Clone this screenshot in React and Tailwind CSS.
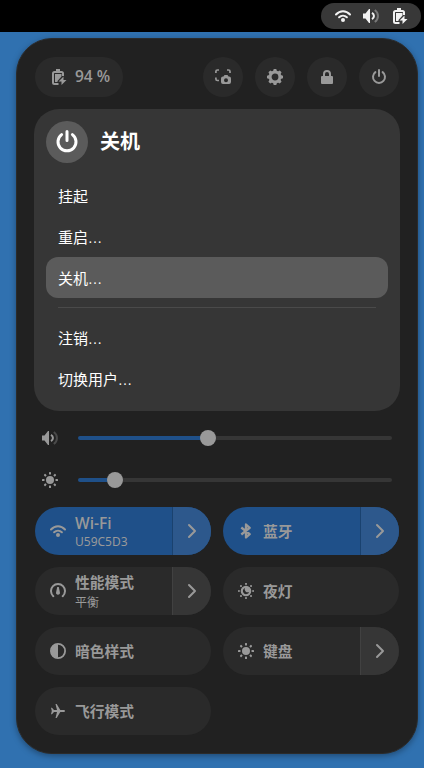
import React from "react";

function Icon({ children, size = "size-4" }) {
  return (
    <svg viewBox="0 0 16 16" className={`${size} shrink-0`} fill="currentColor" aria-hidden="true">
      {children}
    </svg>
  );
}

const stroke = { fill: "none", stroke: "currentColor", strokeWidth: 2 };

function WifiIcon() {
  return (
    <Icon>
      <path {...stroke} strokeLinecap="round" d="M1 6.500C5 2.200 11 2.200 15 6.500" />
      <path {...stroke} strokeLinecap="round" d="M4.100 9.200C6.300 7.100 9.700 7.100 11.900 9.200" />
      <circle cx="8" cy="12" r="2" />
    </Icon>
  );
}

function VolumeIcon() {
  return (
    <Icon>
      <path d="M0 5.500h2.500L6 1h1v14H6l-3.500-4.500H0z" />
      <path {...stroke} d="M9 4.800c2.600 1.600 2.600 4.800 0 6.400" />
      <path {...stroke} opacity="0.35" d="M11.800 2c4.200 3 4.200 9 0 12" />
    </Icon>
  );
}

function BatteryIcon() {
  return (
    <Icon>
      <path d="M5 0h4v2H5z" />
      <path {...stroke} d="M7.500 15H3.500A1.500 1.500 0 0 1 2 13.500v-9A1.500 1.500 0 0 1 3.500 3h7A1.500 1.500 0 0 1 12 4.500V7" />
      <path d="M4 5h6.500v2.500L6.500 12v1H4z" />
      <path d="M12.500 7.500v3.500H15.500L10.500 16v-3.500H7.500z" />
    </Icon>
  );
}

function ScreenshotIcon() {
  return (
    <Icon>
      <path {...stroke} strokeWidth="1.700" d="M.9 4V2.500A1.500 1.500 0 0 1 2.400 1H4M12 1h1.500A1.500 1.500 0 0 1 15 2.500V4M.9 8.500V10a1.500 1.500 0 0 0 1.500 1.500H4" />
      <path
        fillRule="evenodd"
        d="M8 7.500h.5l1-1.500h3l1 1.500h.5a2 2 0 0 1 2 2V13a2 2 0 0 1-2 2H8a2 2 0 0 1-2-2V9.500a2 2 0 0 1 2-2zM11 9.200a2 2 0 1 0 0 4 2 2 0 0 0 0-4z"
      />
    </Icon>
  );
}

function GearIcon() {
  return (
    <Icon>
      <circle cx="8" cy="8" r="4.900" fill="none" stroke="currentColor" strokeWidth="3" />
      {[0, 45, 90, 135].map((angle) => (
        <path key={angle} transform={`rotate(${angle} 8 8)`} d="M6.700 0h2.600l.7 2.500H6zM6 13.500h4L9.300 16H6.700z" />
      ))}
    </Icon>
  );
}

function LockIcon() {
  return (
    <Icon>
      <path {...stroke} d="M5 8V5a3 3 0 0 1 6 0v3" />
      <path d="M3 7h10a1 1 0 0 1 1 1v6a1 1 0 0 1-1 1H3a1 1 0 0 1-1-1V8a1 1 0 0 1 1-1z" />
    </Icon>
  );
}

function PowerIcon({ size }) {
  return (
    <Icon size={size}>
      <path {...stroke} strokeLinecap="round" d="M4.400 3.100a6 6 0 1 0 7.200 0M8 1v6" />
    </Icon>
  );
}

function SunIcon() {
  return (
    <Icon>
      <circle cx="8" cy="8" r="4" />
      {[0, 45, 90, 135, 180, 225, 270, 315].map((angle) => (
        <rect key={angle} x="7" y="0" width="2" height="2.500" rx="0.600" transform={`rotate(${angle} 8 8)`} />
      ))}
    </Icon>
  );
}

function NightLightIcon() {
  return (
    <Icon>
      <path
        fillRule="evenodd"
        d="M8 2.700a5.300 5.300 0 1 0 0 10.600A5.300 5.300 0 0 0 8 2.700zM7 4.900A3 3 0 0 0 11.100 8.900 3.200 3.200 0 1 1 7 4.900z"
      />
      {[0, 45, 90, 135, 180, 225, 270, 315].map((angle) => (
        <circle key={angle} cx="8" cy="0.900" r="1" transform={`rotate(${angle} 8 8)`} />
      ))}
    </Icon>
  );
}

function GaugeIcon() {
  return (
    <Icon>
      <path {...stroke} strokeLinecap="round" d="M3.300 13.200a7 7 0 1 1 9.400 0" />
      <path d="M7.200 4h1.600l1.100 5.200a2 2 0 1 1-3.800 0z" />
    </Icon>
  );
}

function BluetoothIcon() {
  return (
    <Icon>
      <path {...stroke} strokeWidth="2.300" strokeLinejoin="round" d="M3.300 4.500l8.400 6.700L8 14.500v-13l3.700 3.300-8.400 6.700" />
    </Icon>
  );
}

function ContrastIcon() {
  return (
    <Icon>
      <circle cx="8" cy="8" r="7.100" fill="none" stroke="currentColor" strokeWidth="1.800" />
      <path d="M8 1a7 7 0 0 0 0 14z" />
    </Icon>
  );
}

function PlaneIcon() {
  return (
    <Icon>
      <path d="M15 8c0 .6-.7 1-1.500 1h-3.200l-3.600 6H5.500L7 9H4l-2 2.200H1L1.800 8 1 4.800h1L4 7h3L5.500 1h1.200l3.600 6h3.200c.8 0 1.500.4 1.500 1z" />
    </Icon>
  );
}

function ChevronIcon() {
  return (
    <Icon>
      <path {...stroke} strokeLinecap="round" strokeLinejoin="round" d="M5 2l6 6-6 6" />
    </Icon>
  );
}

function RoundButton({ children }) {
  return <button className="flex size-10 items-center justify-center rounded-full bg-[#2a2a2a]">{children}</button>;
}

function MenuItem({ children, active, more }) {
  return (
    <button
      className={`flex h-[41px] items-center rounded-xl px-3 text-left text-[15px] text-white ${more ? "pb-px" : "pt-px"} ${active ? "bg-[#5b5b5b]" : ""}`}
    >
      <span className="leading-5">
        {children}
        {more && <span className="font-['Open_Sans'] text-[19.5px] leading-none font-light">…</span>}
      </span>
    </button>
  );
}

function Slider({ icon, value }) {
  return (
    <div className="flex h-4 items-center px-2">
      {icon}
      <div className="ml-5 flex flex-1 items-center">
        <div className="h-1 rounded-l-full bg-[#1f5089]" style={{ width: value }} />
        <div className="z-10 -mx-2 size-4 shrink-0 rounded-full bg-[#999999]" />
        <div className="h-1 flex-1 rounded-r-full bg-[#363636]" />
      </div>
    </div>
  );
}

function Toggle({ icon, title, subtitle, on, arrow, latin }) {
  return (
    <div className={`flex h-12 overflow-hidden rounded-full ${on ? "bg-[#1f5089]" : "bg-[#2a2a2a]"}`}>
      <button className="flex flex-1 items-center gap-[9px] pl-[15px] text-left">
        {icon}
        <span className="flex flex-col">
          <span
            className={`font-['Open_Sans','Noto_Sans_CJK_SC',sans-serif] ${latin ? "pt-px text-[15.5px] font-semibold" : "text-[14.75px] font-bold"} ${subtitle ? "leading-[19px]" : "leading-5"} ${subtitle && !latin ? "pt-0.5" : ""}`}
          >
            {title}
          </span>
          {subtitle && <span className={`text-[12px] ${latin ? "leading-[17px]" : "pt-0.5 leading-[17px]"}`}>{subtitle}</span>}
        </span>
      </button>
      {arrow && (
        <button
          className={`flex w-[39px] items-center justify-center border-l ${on ? "border-[#1a426f] bg-[#2d588c]" : "border-[#414141] bg-[#363636]"}`}
        >
          <ChevronIcon />
        </button>
      )}
    </div>
  );
}

export default function App() {
  return (
    <div className="flex h-[768px] w-[424px] flex-col overflow-hidden bg-[#3071b0] font-['Noto_Sans','Noto_Sans_CJK_SC',sans-serif]">
      <header className="flex h-8 shrink-0 items-center justify-end bg-black pr-[3px]">
        <div className="flex h-[26px] w-[100px] items-center rounded-full bg-[#383838] pl-[14px] text-[#f2f2f2]">
          <WifiIcon />
          <span className="ml-3 flex">
            <VolumeIcon />
          </span>
          <span className="ml-[13px] flex">
            <BatteryIcon />
          </span>
        </div>
      </header>

      <main className="mt-1.5 ml-4 flex h-[716px] w-[402px] flex-col rounded-[36px] border border-[#2b2b2b] bg-[#212121] px-[17px] pt-[18px] text-[#999999] shadow-[0_2px_6px_rgba(0,0,0,0.35)]">
        <div className="flex gap-3 px-px">
          <div className="mr-auto flex h-10 w-[88px] items-center gap-2 rounded-full bg-[#2a2a2a] pl-4">
            <BatteryIcon />
            <span className="pb-0.5 font-['Open_Sans'] text-[15.5px] leading-5 font-semibold whitespace-nowrap">94 %</span>
          </div>
          <RoundButton><ScreenshotIcon /></RoundButton>
          <RoundButton><GearIcon /></RoundButton>
          <RoundButton><LockIcon /></RoundButton>
          <RoundButton><PowerIcon /></RoundButton>
        </div>

        <section className="mt-3 flex h-[302px] shrink-0 flex-col rounded-[25px] bg-[#363636] p-3 text-white">
          <div className="mb-3 flex items-center gap-3">
            <span className="flex size-[42px] items-center justify-center rounded-full bg-[#5b5b5b]">
              <PowerIcon size="size-6" />
            </span>
            <h1 className="text-xl font-bold">关机</h1>
          </div>
          <MenuItem>挂起</MenuItem>
          <MenuItem more>重启</MenuItem>
          <MenuItem active more>关机</MenuItem>
          <hr className="mx-3 my-[9px] border-t border-[#4a4a4a]" />
          <MenuItem more>注销</MenuItem>
          <MenuItem more>切换用户</MenuItem>
        </section>

        <div className="mt-[19px] flex flex-col gap-[26px]">
          <Slider icon={<VolumeIcon />} value={130} />
          <Slider icon={<SunIcon />} value={37} />
        </div>

        <div className="mt-[19px] grid grid-cols-2 gap-3 px-px">
          <Toggle icon={<WifiIcon />} title="Wi-Fi" subtitle="U59C5D3" latin on arrow />
          <Toggle icon={<BluetoothIcon />} title="蓝牙" on arrow />
          <Toggle icon={<GaugeIcon />} title="性能模式" subtitle="平衡" arrow />
          <Toggle icon={<NightLightIcon />} title="夜灯" />
          <Toggle icon={<ContrastIcon />} title="暗色样式" />
          <Toggle icon={<SunIcon />} title="键盘" arrow />
          <Toggle icon={<PlaneIcon />} title="飞行模式" />
        </div>
      </main>
    </div>
  );
}
